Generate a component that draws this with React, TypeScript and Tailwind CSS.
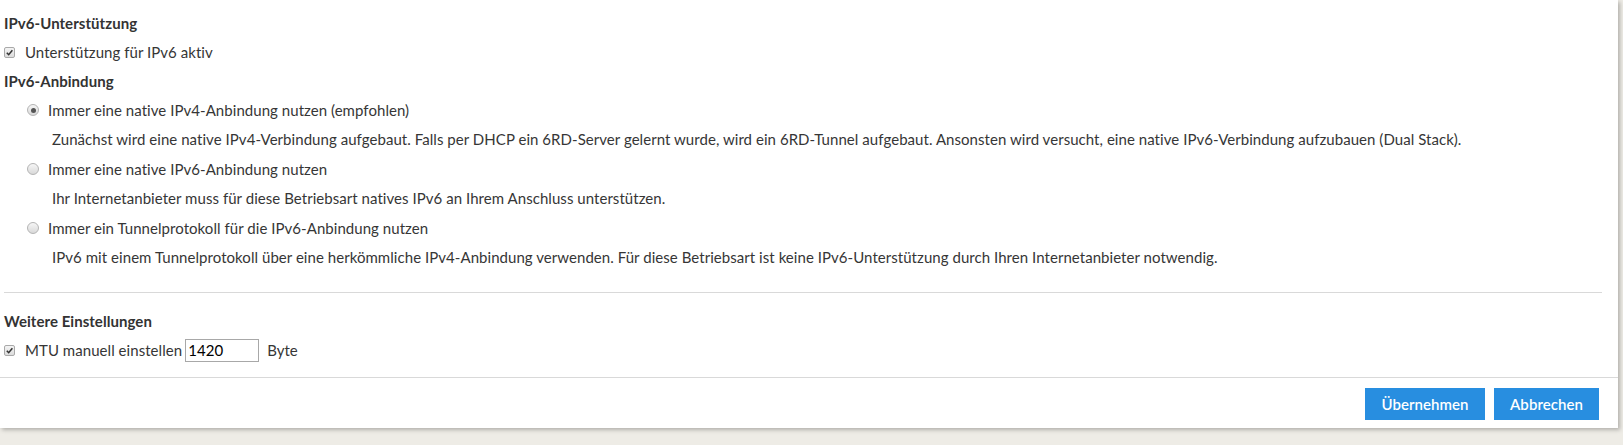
function Checkbox() {
  return (
    <span className="flex h-[11px] w-[11px] shrink-0 items-center justify-center rounded-[2px] border border-[#a9a9a9] bg-gradient-to-b from-[#f4f4f4] to-[#dcdcdc]">
      <svg viewBox="0 0 10 10" className="h-[9px] w-[9px]">
        <path d="M2 5.2 L4.1 7.4 L8.2 2.4" fill="none" stroke="#333" strokeWidth="1.7" />
      </svg>
    </span>
  );
}

function Radio({ checked }: { checked?: boolean }) {
  return (
    <span className="flex h-[12px] w-[12px] shrink-0 items-center justify-center rounded-full border border-[#b4b4b4] bg-gradient-to-b from-[#f6f6f6] to-[#d9d9d9]">
      {checked && <span className="h-[5px] w-[5px] rounded-full bg-[#555]" />}
    </span>
  );
}

const options = [
  {
    label: "Immer eine native IPv4-Anbindung nutzen (empfohlen)",
    desc: "Zunächst wird eine native IPv4-Verbindung aufgebaut. Falls per DHCP ein 6RD-Server gelernt wurde, wird ein 6RD-Tunnel aufgebaut. Ansonsten wird versucht, eine native IPv6-Verbindung aufzubauen (Dual Stack).",
    checked: true,
  },
  {
    label: "Immer eine native IPv6-Anbindung nutzen",
    desc: "Ihr Internetanbieter muss für diese Betriebsart natives IPv6 an Ihrem Anschluss unterstützen.",
  },
  {
    label: "Immer ein Tunnelprotokoll für die IPv6-Anbindung nutzen",
    desc: "IPv6 mit einem Tunnelprotokoll über eine herkömmliche IPv4-Anbindung verwenden. Für diese Betriebsart ist keine IPv6-Unterstützung durch Ihren Internetanbieter notwendig.",
  },
];

export default function App() {
  return (
    <div className="h-[445px] w-[1623px] bg-[#eeece6] font-['Lato',sans-serif] text-[15px] tracking-[0.05px] text-[#363636]">
      <div className="w-[1618px] bg-white shadow-[2px_2px_4px_rgba(0,0,0,0.25)]">
        <div className="pl-[4px] pr-[16px] pt-[9px]">
          <h2 className="flex h-[28px] items-center font-bold text-[#333]">IPv6-Unterstützung</h2>
          <label className="flex h-[30px] items-center gap-[10px]">
            <Checkbox />
            <span>Unterstützung für IPv6 aktiv</span>
          </label>
          <h2 className="flex h-[28px] items-center font-bold text-[#333]">IPv6-Anbindung</h2>
          <div className="pl-[23px]">
            {options.map((o) => (
              <div key={o.label}>
                <label className="flex h-[30px] items-center gap-[9px]">
                  <Radio checked={o.checked} />
                  <span>{o.label}</span>
                </label>
                <p className="flex h-[29px] items-center pl-[25px]">{o.desc}</p>
              </div>
            ))}
          </div>
          <hr className="mt-[20px] border-0 border-t border-[#d9d9d9]" />
          <h2 className="mt-[14px] flex h-[28px] items-center font-bold text-[#333]">Weitere Einstellungen</h2>
          <div className="flex h-[30px] items-center">
            <Checkbox />
            <span className="ml-[10px]">MTU manuell einstellen</span>
            <input
              defaultValue="1420"
              className="ml-[3px] h-[23px] w-[74px] border border-[#a8a8a8] px-[2px] font-['Lato',sans-serif] text-[15px] text-black outline-none"
            />
            <span className="ml-[8px]">Byte</span>
          </div>
        </div>
        <div className="mt-[12px] flex justify-end gap-[9px] border-t border-[#d9d9d9] pb-[8px] pr-[19px] pt-[10px]">
          <button className="h-[32px] w-[120px] bg-[#288ee0] text-[15px] font-semibold text-white">Übernehmen</button>
          <button className="h-[32px] w-[105px] bg-[#288ee0] text-[15px] font-semibold text-white">Abbrechen</button>
        </div>
      </div>
    </div>
  );
}
